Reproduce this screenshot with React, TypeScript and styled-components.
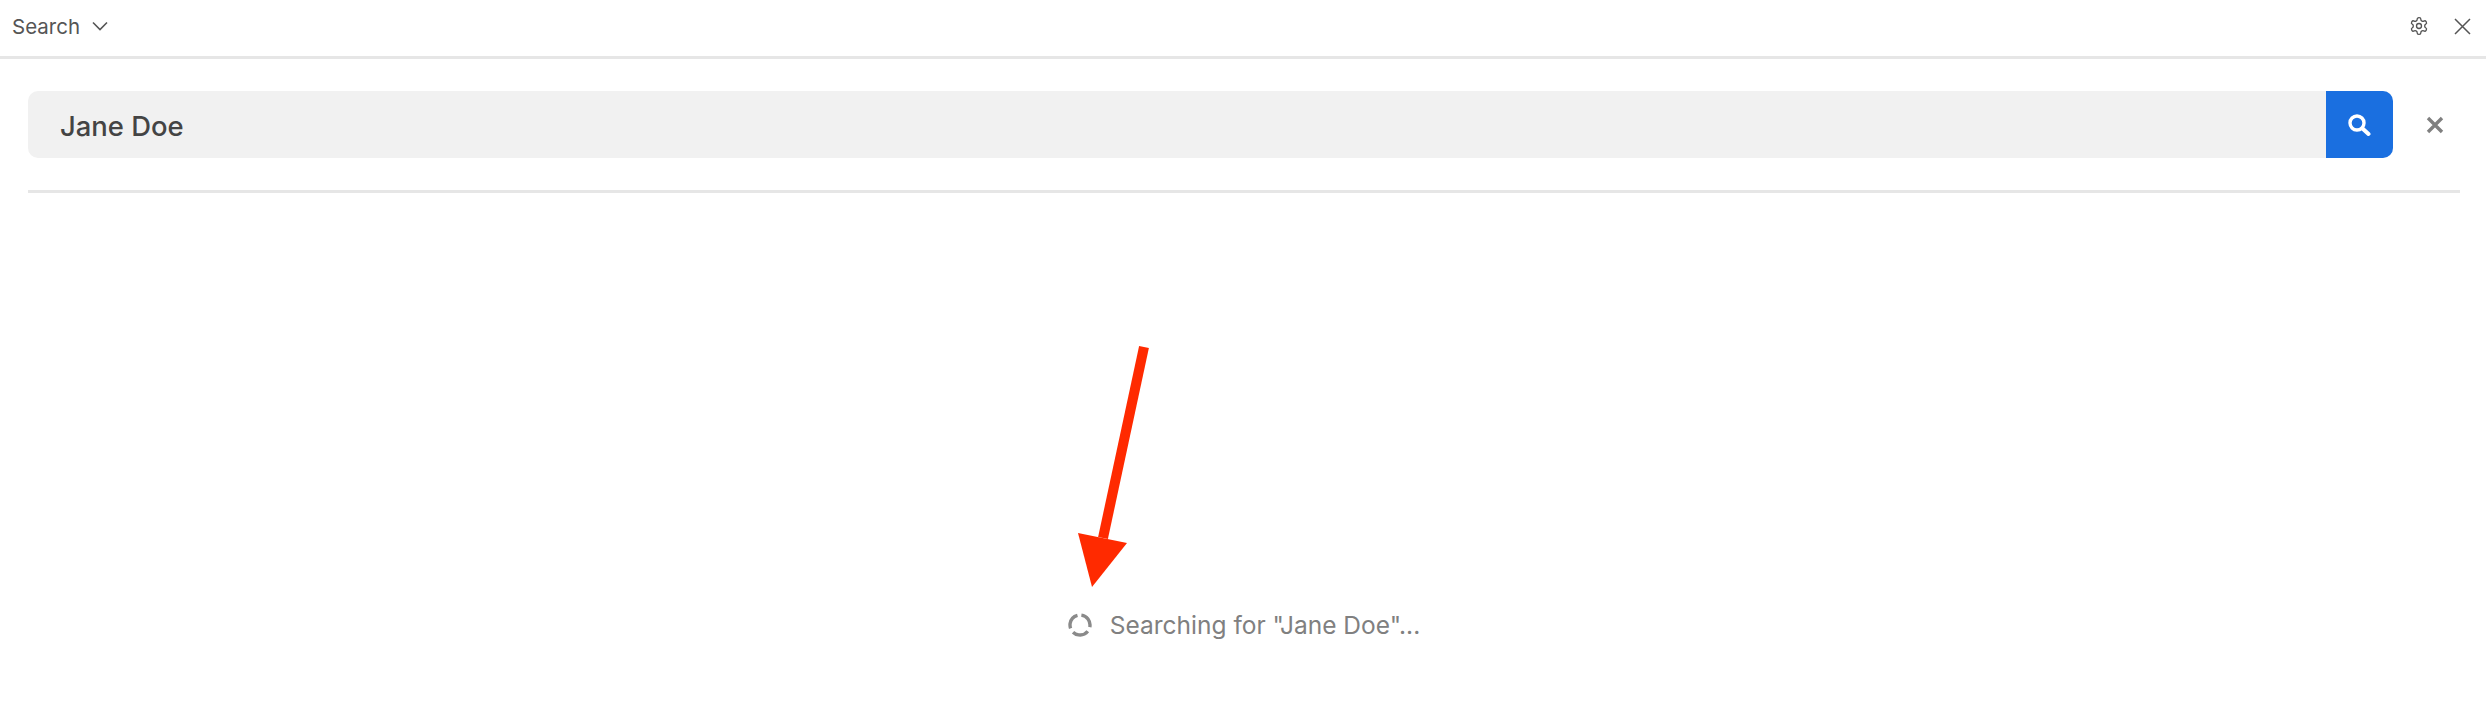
import React from "react"
import styled, { createGlobalStyle } from "styled-components"

const GlobalStyle = createGlobalStyle`
  html, body {
    margin: 0;
    padding: 0;
    background: #ffffff;
    font-family: "Inter", "Liberation Sans", sans-serif;
  }
`

const Page = styled.div`
  position: relative;
  width: 2486px;
  height: 704px;
  overflow: hidden;
  background: #ffffff;
`

const TopBar = styled.div`
  box-sizing: border-box;
  height: 59px;
  display: flex;
  align-items: center;
  justify-content: space-between;
  padding: 0 15px 4px 12px;
  border-bottom: 3px solid #e6e6e6;
`

const TitleGroup = styled.div`
  display: flex;
  align-items: center;
  gap: 12px;
  color: #555555;
  font-size: 20.5px;
`

const TopActions = styled.div`
  display: flex;
  align-items: center;
  gap: 25px;
`

const Body = styled.div`
  padding: 32px 26px 0 28px;
`

const SearchRow = styled.div`
  display: flex;
  align-items: center;
  height: 67px;
`

const SearchField = styled.div`
  flex: 1;
  display: flex;
  height: 100%;
  border-radius: 10px;
  overflow: hidden;
  background: #f1f1f1;
`

const SearchInput = styled.div`
  flex: 1;
  display: flex;
  align-items: center;
  padding: 2px 0 0 32px;
  color: #444444;
  font-size: 27.4px;
  font-weight: 500;
`

const SearchButton = styled.div`
  width: 67px;
  display: flex;
  align-items: center;
  justify-content: center;
  padding-right: 2px;
  box-sizing: border-box;
  background: #1a6fe0;
`

const ClearButton = styled.div`
  width: 67px;
  display: flex;
  align-items: center;
  justify-content: flex-end;
  padding-right: 16px;
  box-sizing: border-box;
`

const Divider = styled.div`
  height: 3px;
  margin-top: 32px;
  background: #e6e6e6;
`

const Status = styled.div`
  display: flex;
  align-items: center;
  justify-content: center;
  gap: 18px;
  margin-top: 417px;
  color: #808080;
  font-size: 24.5px;
`

const ArrowOverlay = styled.svg`
  position: absolute;
  left: 0;
  top: 0;
  pointer-events: none;
`

const App: React.FC = () => {
  return (
    <Page>
      <GlobalStyle />
      <TopBar>
        <TitleGroup>
          <span>Search</span>
          <svg width="16" height="10" viewBox="0 0 16 10" fill="none">
            <path d="M1 1.5 L8 8.5 L15 1.5" stroke="#555" strokeWidth="1.6" />
          </svg>
        </TitleGroup>
        <TopActions>
          <svg
            width="20"
            height="20"
            viewBox="0 0 24 24"
            fill="none"
            stroke="#555"
            strokeWidth="1.6"
            strokeLinejoin="round"
          >
            <path d="M12.22 2h-.44a2 2 0 0 0-2 2v.18a2 2 0 0 1-1 1.73l-.43.25a2 2 0 0 1-2 0l-.15-.08a2 2 0 0 0-2.73.73l-.22.38a2 2 0 0 0 .73 2.73l.15.1a2 2 0 0 1 1 1.72v.51a2 2 0 0 1-1 1.74l-.15.09a2 2 0 0 0-.73 2.73l.22.38a2 2 0 0 0 2.73.73l.15-.08a2 2 0 0 1 2 0l.43.25a2 2 0 0 1 1 1.73V20a2 2 0 0 0 2 2h.44a2 2 0 0 0 2-2v-.18a2 2 0 0 1 1-1.73l.43-.25a2 2 0 0 1 2 0l.15.08a2 2 0 0 0 2.73-.73l.22-.39a2 2 0 0 0-.73-2.73l-.15-.08a2 2 0 0 1-1-1.74v-.5a2 2 0 0 1 1-1.74l.15-.09a2 2 0 0 0 .73-2.73l-.22-.38a2 2 0 0 0-2.73-.73l-.15.08a2 2 0 0 1-2 0l-.43-.25a2 2 0 0 1-1-1.73V4a2 2 0 0 0-2-2z" />
            <circle cx="12" cy="12" r="3" />
          </svg>
          <svg width="17" height="17" viewBox="0 0 17 17" fill="none">
            <path d="M1 1 L16 16 M16 1 L1 16" stroke="#555" strokeWidth="1.5" />
          </svg>
        </TopActions>
      </TopBar>

      <Body>
        <SearchRow>
          <SearchField>
            <SearchInput>Jane Doe</SearchInput>
            <SearchButton>
              <svg width="24" height="24" viewBox="0 0 24 24" fill="none">
                <circle cx="10" cy="10" r="7" stroke="#fff" strokeWidth="3.4" />
                <path d="M15.5 15.5 L21.5 21" stroke="#fff" strokeWidth="4" strokeLinecap="round" />
              </svg>
            </SearchButton>
          </SearchField>
          <ClearButton>
            <svg width="18" height="18" viewBox="0 0 18 18" fill="none">
              <path d="M2 2 L16 16 M16 2 L2 16" stroke="#808080" strokeWidth="3.4" />
            </svg>
          </ClearButton>
        </SearchRow>
        <Divider />
        <Status>
          <svg width="24" height="24" viewBox="0 0 24 24" fill="none">
            <circle
              cx="12"
              cy="12"
              r="10"
              stroke="#8a8a8a"
              strokeWidth="3.4"
              strokeDasharray="16.5 4.5"
              transform="rotate(-82 12 12)"
            />
          </svg>
          <span>Searching for "Jane Doe"...</span>
        </Status>
      </Body>

      <ArrowOverlay width="2486" height="704" viewBox="0 0 2486 704">
        <path d="M1144 347 L1103 538" stroke="#ff2a00" strokeWidth="10" />
        <polygon points="1078,533 1127,543 1092,587" fill="#ff2a00" />
      </ArrowOverlay>
    </Page>
  )
}

export default App
